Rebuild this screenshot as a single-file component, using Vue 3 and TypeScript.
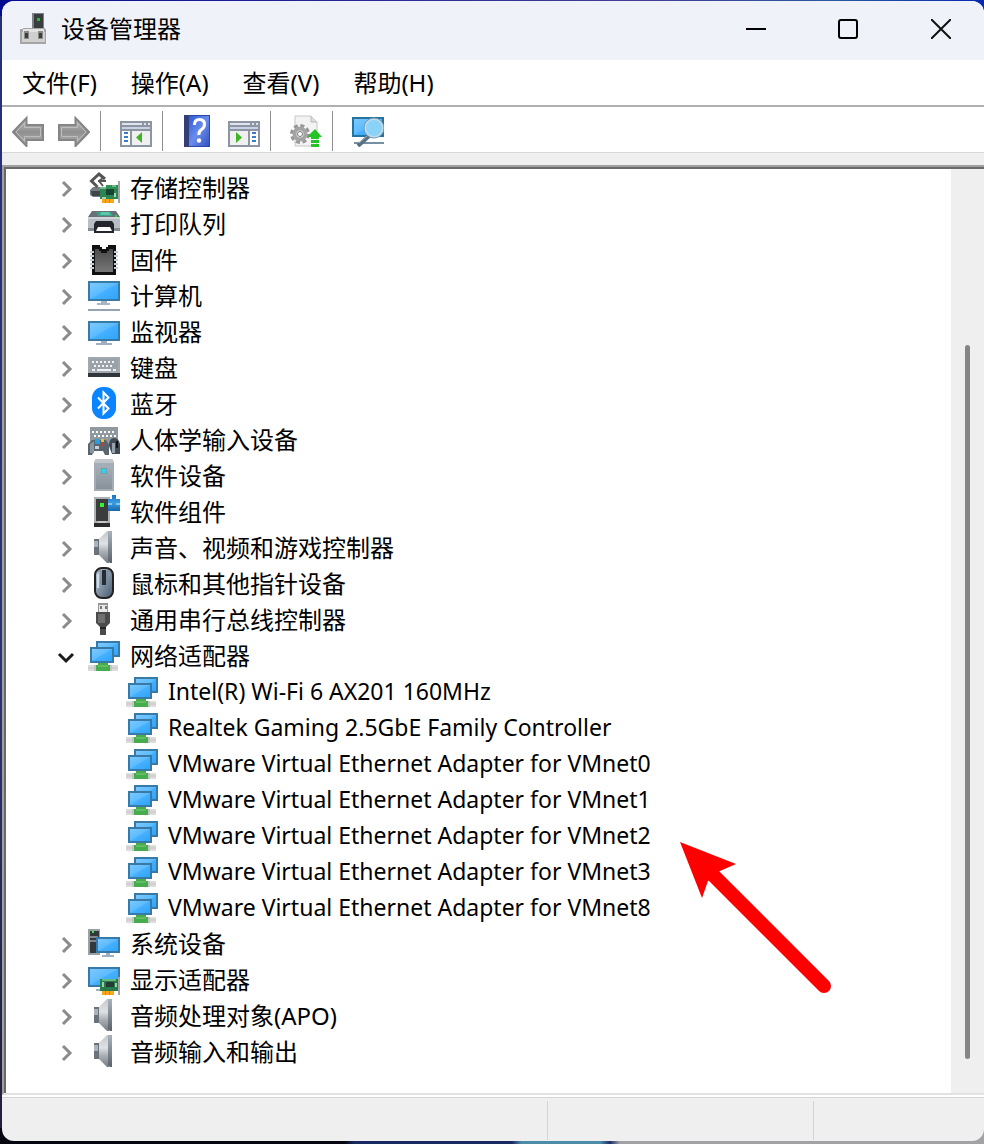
<script setup lang="ts">
import { computed, ref } from 'vue'

interface TreeNode {
  label: string
  icon: string
  children?: string[]
}

const menus: string[] = ['文件(F)', '操作(A)', '查看(V)', '帮助(H)']

const toolGroups: { icon: string; label: string }[][] = [
  [
    { icon: 'back', label: '后退' },
    { icon: 'forward', label: '前进' },
  ],
  [{ icon: 'pane-left', label: '显示/隐藏控制台树' }],
  [
    { icon: 'help', label: '帮助' },
    { icon: 'pane-right', label: '显示/隐藏操作窗格' },
  ],
  [{ icon: 'update', label: '更新驱动程序' }],
  [{ icon: 'scan', label: '扫描检测硬件改动' }],
]

const nodes: TreeNode[] = [
  { label: '存储控制器', icon: 'storage' },
  { label: '打印队列', icon: 'printer' },
  { label: '固件', icon: 'firmware' },
  { label: '计算机', icon: 'computer' },
  { label: '监视器', icon: 'monitor' },
  { label: '键盘', icon: 'keyboard' },
  { label: '蓝牙', icon: 'bluetooth' },
  { label: '人体学输入设备', icon: 'hid' },
  { label: '软件设备', icon: 'softdevice' },
  { label: '软件组件', icon: 'component' },
  { label: '声音、视频和游戏控制器', icon: 'speaker' },
  { label: '鼠标和其他指针设备', icon: 'mouse' },
  { label: '通用串行总线控制器', icon: 'usb' },
  {
    label: '网络适配器',
    icon: 'network',
    children: [
      'Intel(R) Wi-Fi 6 AX201 160MHz',
      'Realtek Gaming 2.5GbE Family Controller',
      'VMware Virtual Ethernet Adapter for VMnet0',
      'VMware Virtual Ethernet Adapter for VMnet1',
      'VMware Virtual Ethernet Adapter for VMnet2',
      'VMware Virtual Ethernet Adapter for VMnet3',
      'VMware Virtual Ethernet Adapter for VMnet8',
    ],
  },
  { label: '系统设备', icon: 'system' },
  { label: '显示适配器', icon: 'display' },
  { label: '音频处理对象(APO)', icon: 'speaker' },
  { label: '音频输入和输出', icon: 'speaker' },
]

const expanded = ref<Set<string>>(new Set(['网络适配器']))

function toggle(node: TreeNode) {
  const next = new Set(expanded.value)
  if (next.has(node.label)) next.delete(node.label)
  else next.add(node.label)
  expanded.value = next
}

const scroll = ref({ start: 19, size: 77.3 })
const thumbStyle = computed(() => ({
  top: `${scroll.value.start}%`,
  height: `${scroll.value.size}%`,
}))
</script>

<template>
  <div class="desktop">
    <svg class="defs" aria-hidden="true">
      <defs>
        <linearGradient id="g-screen" x1="0" y1="0" x2="1" y2="1">
          <stop offset="0" stop-color="#7cc9ff" />
          <stop offset="0.48" stop-color="#5dbbff" />
          <stop offset="0.52" stop-color="#45b0ff" />
          <stop offset="1" stop-color="#2ea5fd" />
        </linearGradient>
        <linearGradient id="g-arrow" x1="0" y1="0" x2="0" y2="1">
          <stop offset="0" stop-color="#c4c4c4" />
          <stop offset="0.5" stop-color="#8f8f8f" />
          <stop offset="1" stop-color="#b2b2b2" />
        </linearGradient>
        <linearGradient id="g-help" x1="0" y1="0" x2="1" y2="1">
          <stop offset="0" stop-color="#2d5bd8" />
          <stop offset="0.5" stop-color="#6b8ceb" />
          <stop offset="1" stop-color="#3252c4" />
        </linearGradient>
        <linearGradient id="g-metal" x1="0" y1="0" x2="0" y2="1">
          <stop offset="0" stop-color="#a7b0b8" />
          <stop offset="1" stop-color="#87919b" />
        </linearGradient>
        <linearGradient id="g-cone" x1="0" y1="0" x2="0" y2="1">
          <stop offset="0" stop-color="#c3c8cc" />
          <stop offset="0.4" stop-color="#dfe2e4" />
          <stop offset="0.65" stop-color="#a9aeb2" />
          <stop offset="1" stop-color="#767c81" />
        </linearGradient>
        <linearGradient id="g-rim" x1="0" y1="0" x2="0" y2="1">
          <stop offset="0" stop-color="#a9b2ba" />
          <stop offset="1" stop-color="#59626a" />
        </linearGradient>
        <linearGradient id="g-mouse" x1="0" y1="0" x2="1" y2="1">
          <stop offset="0" stop-color="#c3ced9" />
          <stop offset="0.5" stop-color="#8293a5" />
          <stop offset="1" stop-color="#465769" />
        </linearGradient>
        <linearGradient id="g-chip" x1="0" y1="0" x2="0" y2="1">
          <stop offset="0" stop-color="#4b4b4b" />
          <stop offset="1" stop-color="#777" />
        </linearGradient>
        <linearGradient id="g-plus" x1="0" y1="0" x2="0" y2="1">
          <stop offset="0" stop-color="#1f74bd" />
          <stop offset="0.5" stop-color="#3c9de0" />
          <stop offset="1" stop-color="#1767ac" />
        </linearGradient>
      </defs>

      <symbol id="i-app" viewBox="0 0 32 32">
        <path d="M13 0h12v18H13z" fill="#7d8286" />
        <path d="M15 1h9v16h-9z" fill="#3a3d3f" />
        <path d="M18 5h3v3h-3z" fill="#22c024" />
        <path d="M2 16h2v-1h22v1h1v15H1V16z" fill="#a5a5a5" />
        <path d="M4 16h21v4H4z" fill="#e3e3e3" />
        <path d="M3 19h23v10H3z" fill="#cfcfcf" />
        <path d="M5 18h5v8H5zM19 18h5v8h-5z" fill="#8a8a8a" />
        <path d="M6 20h3v5H6zM20 20h3v5h-3z" fill="#3d3d3d" />
      </symbol>

      <symbol id="i-back" viewBox="0 0 32 32">
        <path d="M1 17 14.500 3v7H31v15H14.500v6z" fill="url(#g-arrow)" stroke="#858585" stroke-width="2" />
        <path d="M4 17 12.500 8v4.500H28.500v9H12.500V26z" fill="none" stroke="#bdbdbd" />
      </symbol>
      <symbol id="i-forward" viewBox="0 0 32 32">
        <path d="M31 17 17.500 3v7H1v15h16.500v6z" fill="url(#g-arrow)" stroke="#858585" stroke-width="2" />
        <path d="M28 17 19.500 8v4.500H3.500v9h16V26z" fill="none" stroke="#bdbdbd" />
      </symbol>

      <symbol id="i-pane-left" viewBox="0 0 32 32">
        <g shape-rendering="crispEdges">
          <path d="M0 6h32v26H0z" fill="#8d94a2" />
          <path d="M2 8h20v2H2zM24 8h2v2h-2zM28 8h2v2h-2z" fill="#dfe4ee" />
          <path d="M2 12h28v2H2z" fill="#c9d2e2" />
          <path d="M2 16h8v14H2z" fill="#fff" />
          <path d="M12 16h18v14H12z" fill="#f0f0f0" />
          <path d="M4 17h4v2H4zM4 21h4v2H4zM4 25h4v2H4z" fill="#3c7cc4" />
        </g>
        <path d="M22 17v11l-6-5.500z" fill="#3fb526" />
      </symbol>
      <symbol id="i-pane-right" viewBox="0 0 32 32">
        <g shape-rendering="crispEdges">
          <path d="M0 6h32v26H0z" fill="#8d94a2" />
          <path d="M2 8h20v2H2zM24 8h2v2h-2zM28 8h2v2h-2z" fill="#dfe4ee" />
          <path d="M2 12h28v2H2z" fill="#c9d2e2" />
          <path d="M22 16h8v14h-8z" fill="#fff" />
          <path d="M2 16h18v14H2z" fill="#f0f0f0" />
          <path d="M24 17h4v2h-4zM24 21h4v2h-4zM24 25h4v2h-4z" fill="#3c7cc4" />
        </g>
        <path d="M8 17v11l6-5.500z" fill="#3fb526" />
      </symbol>

      <symbol id="i-help" viewBox="0 0 32 32">
        <path d="M2 0h26v32H2z" fill="#2a48a4" />
        <path d="M2 0h5v32H2z" fill="#343f78" />
        <path d="M7 1h20v30H7z" fill="url(#g-help)" />
        <path d="M12.500 10q0-5.500 5-5.500t5 5q0 3-3 5t-2.500 5.500" fill="none" stroke="#fff" stroke-width="3" />
        <circle cx="17" cy="25.500" r="2.200" fill="#fff" />
      </symbol>

      <symbol id="i-update" viewBox="0 0 32 32">
        <path d="M5 1h16l6 6v24H5z" fill="#f3f3f3" stroke="#c6c6c6" />
        <path d="M21 1v6h6" fill="#ddd" stroke="#bababa" />
        <circle cx="10" cy="19" r="8.500" fill="none" stroke="#969696" stroke-width="3" stroke-dasharray="4 2.700" />
        <circle cx="10" cy="19" r="5.500" fill="#f4f4f4" stroke="#a4a4a4" stroke-width="4" />
        <circle cx="10" cy="19" r="2.500" fill="#fff" stroke="#777" />
        <path d="M25 14l7 8h-3v2h-8v-2h-4z" fill="#24c424" />
        <path d="M21 25h8v3h-8zM21 29h8v3h-8z" fill="#24c424" />
      </symbol>

      <symbol id="i-scan" viewBox="0 0 32 32">
        <path d="M0 2h32v20H0z" fill="#27739f" />
        <path d="M2 4h28v16H2z" fill="url(#g-screen)" />
        <path d="M2 27h30v2H2z" fill="#7590a5" />
        <path d="M17 21 6 31" stroke="#587080" stroke-width="4" />
        <path d="M16 20 7 28" stroke="#a8b6be" stroke-width="1" />
        <circle cx="22" cy="13" r="9" fill="#8bd2f9" stroke="#c4dce9" stroke-width="2" />
        <circle cx="22" cy="13" r="10" fill="none" stroke="#6b9db9" />
      </symbol>

      <symbol id="i-storage" viewBox="0 0 32 32">
        <path d="M2 19l3-3h7v10H5l-3-2z" fill="#737d82" />
        <path d="M3 20h10v5H4z" fill="#3f4549" />
        <path d="M17 8l-6-5-7.500 7 6 6" fill="none" stroke="#555" stroke-width="3" />
        <path d="M10 10h8M11 10l4-3M11 10l4 5" fill="none" stroke="#555" stroke-width="2" />
        <g shape-rendering="crispEdges">
          <path d="M30 10h2v22h-2z" fill="#a3a3a3" />
          <path d="M18 14h12v4H18z" fill="#2f9152" />
          <path d="M12 18h18v10H12z" fill="#2c8354" />
          <path d="M12 16h6v2h-6zM24 14h4v2h-4z" fill="#72bb8e" />
          <path d="M18 18h8v6h-8z" fill="#174432" />
          <path d="M14 26h4v2h-4zM26 22h2v4h-2z" fill="#a6d2b5" />
          <path d="M14 28h12v4H14z" fill="#fba719" />
          <path d="M17 28h1v4h-1zM21 28h1v4h-1z" fill="#d88608" />
        </g>
      </symbol>

      <symbol id="i-printer" viewBox="0 0 32 32">
        <path d="M4 4h24l4 6H0z" fill="#687078" />
        <path d="M8 5h15l2 4H10z" fill="#3c9c87" />
        <path d="M13 5h8l2 3H12z" fill="#56c9a7" />
        <path d="M0 10h32v13H0z" fill="#b7bec6" />
        <path d="M0 10h32v2H0z" fill="#d2d6db" />
        <path d="M0 21h32v3H0z" fill="#838b95" />
        <path d="M27 8h2v2h-2z" fill="#20e23f" />
        <path d="M8 14h16l2 3v9H6v-9z" fill="#23272b" />
        <path d="M10 20h12l2 4H8z" fill="#fff" />
      </symbol>

      <symbol id="i-firmware" viewBox="0 0 32 32">
        <g shape-rendering="crispEdges">
          <path d="M4 2h8v2h2v2h4V4h2V2h8v30H4z" fill="#111" />
          <path d="M7 6h4v2h2v2h6V8h2V6h4v23H7z" fill="url(#g-chip)" />
          <path d="M2 9h4M2 13h4M2 17h4M2 21h4M2 25h4M26 9h4M26 13h4M26 17h4M26 21h4M26 25h4" stroke="#c3ccd9" stroke-width="2" />
        </g>
      </symbol>

      <symbol id="i-computer" viewBox="0 0 32 32">
        <g shape-rendering="crispEdges">
          <path d="M0 2h32v20H0z" fill="#3979a5" />
          <path d="M2 4h28v16H2z" fill="url(#g-screen)" />
          <path d="M13 22h6v2h3v2H9v-2h4z" fill="#a9b5c1" />
          <path d="M0 30h32v2H0z" fill="#94a2b3" />
        </g>
      </symbol>

      <symbol id="i-monitor" viewBox="0 0 32 32">
        <g shape-rendering="crispEdges">
          <path d="M0 6h32v20H0z" fill="#3979a5" />
          <path d="M2 8h28v16H2z" fill="url(#g-screen)" />
          <path d="M13 26h6v2h5v2H8v-2h5z" fill="#a2afbe" />
        </g>
      </symbol>

      <symbol id="i-keyboard" viewBox="0 0 32 32">
        <g shape-rendering="crispEdges">
          <path d="M0 6h32v16H0z" fill="#a1a8ae" />
          <path d="M2 8h28v12H2z" fill="#9aa2a9" />
          <path d="M4 11h24M6 15h20" stroke="#f3f4f5" stroke-width="2" stroke-dasharray="2 2" />
          <path d="M4 18h3v2H4zM9 18h14v2H9zM25 18h3v2h-3z" fill="#eef0f1" />
          <path d="M0 22h32v4H0z" fill="#30373c" />
        </g>
      </symbol>

      <symbol id="i-bluetooth" viewBox="0 0 32 32">
        <rect x="4" y="0" width="24" height="32" rx="11" fill="#0a84ff" />
        <path d="M10 10.500 20.500 21.500 15.500 26.500V5.500L20.500 10.500 10 21.500" fill="none" stroke="#fff" stroke-width="2" />
      </symbol>

      <symbol id="i-hid" viewBox="0 0 32 32">
        <g shape-rendering="crispEdges">
          <path d="M2 4h28v18H2z" fill="#9199a0" />
          <path d="M4 9h24M6 13h22" stroke="#fff" stroke-width="2" stroke-dasharray="2 2" />
        </g>
        <path d="M4 17h14l3 5v10h-4l-2-4H6l-2 4H0V21z" fill="#58646e" />
        <path d="M2 21l4-3v12H2z" fill="#8997a2" />
        <path d="M7 16h5v5H7z" fill="#2a9ed8" />
        <path d="M13 16h3v3h-3z" fill="#f4bd2d" />
        <path d="M13 20h3v3h-3z" fill="#d7332b" />
        <path d="M7 23h4v3H7z" fill="#cad1d6" />
        <path d="M21 23q0-8 5-8t6 6v10H24z" fill="#434c54" />
        <path d="M24 20h3v10h-3z" fill="#97a4b0" />
        <path d="M28 18h2v7h-2z" fill="#111" />
      </symbol>

      <symbol id="i-softdevice" viewBox="0 0 32 32">
        <path d="M8 0h16l2 3v29H6V3z" fill="#a4acb4" />
        <path d="M8 0h16l2 4H6z" fill="#c0c6cb" />
        <path d="M8 6h16v24H8z" fill="url(#g-metal)" />
        <path d="M13 9h6v6h-6z" fill="#6fa1ad" />
        <path d="M14 10h4v4h-4z" fill="#24d8f4" />
      </symbol>

      <symbol id="i-component" viewBox="0 0 32 32">
        <g shape-rendering="crispEdges">
          <path d="M6 2h16v26H6z" fill="#adb2b6" />
          <path d="M8 4h12v22H8z" fill="#3c3c3c" />
          <path d="M12 8h4v4h-4z" fill="#2dfa2c" />
          <path d="M6 28h16v4H6z" fill="#2c2c2c" />
          <path d="M10 26h8v2h-8z" fill="#c9c9c9" />
          <path d="M24 0h4v4h4v12H20V4h4z" fill="url(#g-plus)" />
          <path d="M20 8h4v2h-4zM28 8h4v2h-4z" fill="#82c6f5" />
        </g>
      </symbol>

      <symbol id="i-speaker" viewBox="0 0 32 32">
        <path d="M6 8h6v16H6z" fill="#6b737a" />
        <path d="M6 10h4v6H6z" fill="#abb4bb" />
        <path d="M11 8 19 0h2v32h-2L11 24z" fill="url(#g-cone)" />
        <path d="M20 0h4v32h-2l-2-2z" fill="url(#g-rim)" />
      </symbol>

      <symbol id="i-mouse" viewBox="0 0 32 32">
        <rect x="7" y="1" width="18" height="30" rx="7" fill="url(#g-mouse)" stroke="#222" stroke-width="2" />
        <path d="M10 4h3v13h6V4h3" fill="none" stroke="#728395" />
        <rect x="14" y="3" width="4" height="15" fill="#252c33" />
        <path d="M10 7v14" stroke="#cfdbe6" stroke-width="2" />
      </symbol>

      <symbol id="i-usb" viewBox="0 0 32 32">
        <path d="M10 0h10v9H10z" fill="#949494" />
        <path d="M11 2h8v7h-8z" fill="#e9e9e9" />
        <path d="M12 3h2v3h-2zM17 3h2v3h-2z" fill="#777" />
        <path d="M8 9h14v11l-4 4v8h-6v-8l-4-4z" fill="#4b4b4b" />
        <path d="M10 11h7v9h-7z" fill="#707070" />
        <path d="M12 24h6v2h-6z" fill="#252525" />
      </symbol>

      <symbol id="i-network" viewBox="0 0 32 32">
        <g shape-rendering="crispEdges">
          <path d="M8 2h24v16H8z" fill="#3979a5" />
          <path d="M10 4h20v12H10z" fill="url(#g-screen)" />
          <path d="M2 8h24v16H2z" fill="#3979a5" />
          <path d="M4 10h20v12H4z" fill="url(#g-screen)" />
          <path d="M0 26h30v6H0z" fill="#dcdcdc" />
          <path d="M0 28h30v2H0z" fill="#d0d0d0" />
          <path d="M6 26h2v6H6zM22 26h2v6h-2z" fill="#c2c6c2" />
          <path d="M10 24h10v2h2v6H8v-6h2z" fill="#46ac4e" />
          <path d="M10 26h10v2H10z" fill="#62bd62" />
        </g>
      </symbol>

      <symbol id="i-system" viewBox="0 0 32 32">
        <g shape-rendering="crispEdges">
          <path d="M0 2h12v26H0z" fill="#9aa1a6" />
          <path d="M2 4h9v22H2z" fill="#33383b" />
          <path d="M4 4h2v2H4z" fill="#35ed4c" />
          <path d="M2 9h8v2H2zM2 13h6v2H2z" fill="#7f878d" />
          <path d="M8 10h24v16H8z" fill="#3979a5" />
          <path d="M10 12h20v12H10z" fill="url(#g-screen)" />
          <path d="M18 26h4v2h4v2H14v-2h4z" fill="#9fb0c0" />
        </g>
      </symbol>

      <symbol id="i-display" viewBox="0 0 32 32">
        <g shape-rendering="crispEdges">
          <path d="M0 4h32v20H0z" fill="#3979a5" />
          <path d="M2 6h28v16H2z" fill="url(#g-screen)" />
          <path d="M8 26h6v2H8z" fill="#9fb0c0" />
          <path d="M30 14h2v18h-2z" fill="#a3a3a3" />
          <path d="M12 16h18v12H12z" fill="#267b49" />
          <path d="M14 16h14v2H14z" fill="#63b884" />
          <path d="M18 19h8v5h-8z" fill="#243a32" />
          <path d="M14 19h2v5h-2zM27 20h2v4h-2z" fill="#9bd0ae" />
          <path d="M14 28h12v4H14z" fill="#fba719" />
          <path d="M17 28h1v4h-1zM21 28h1v4h-1z" fill="#d88608" />
        </g>
      </symbol>
    </svg>

    <main class="window">
      <header class="titlebar">
        <svg class="icon app-icon"><use href="#i-app" /></svg>
        <h1 class="title">设备管理器</h1>
        <div class="caption">
          <button type="button" class="cap-btn" aria-label="最小化">
            <svg width="20" height="20"><path d="M0 10h20" stroke="#000" stroke-width="2" /></svg>
          </button>
          <button type="button" class="cap-btn" aria-label="最大化">
            <svg width="20" height="20">
              <rect x="1" y="1" width="18" height="18" rx="2" fill="none" stroke="#000" stroke-width="2" />
            </svg>
          </button>
          <button type="button" class="cap-btn close" aria-label="关闭">
            <svg width="20" height="20"><path d="M0 0 20 20M20 0 0 20" stroke="#111" stroke-width="2" /></svg>
          </button>
        </div>
      </header>

      <nav class="menubar">
        <button v-for="m in menus" :key="m" type="button" class="menu">{{ m }}</button>
      </nav>

      <div class="toolbar" role="toolbar">
        <div v-for="(group, g) in toolGroups" :key="g" class="tool-group">
          <button v-for="t in group" :key="t.icon" type="button" class="tool" :aria-label="t.label">
            <svg class="icon"><use :href="`#i-${t.icon}`" /></svg>
          </button>
        </div>
      </div>

      <section class="content">
        <ul class="tree" role="tree">
          <li v-for="node in nodes" :key="node.label" role="treeitem" :aria-expanded="expanded.has(node.label)">
            <div class="row category">
              <button type="button" class="twisty" :aria-label="node.label" @click="toggle(node)">
                <svg v-if="expanded.has(node.label)" width="18" height="18">
                  <path d="M2 6l7 7 7-7" fill="none" stroke="#1b1b1b" stroke-width="3" />
                </svg>
                <svg v-else width="18" height="18">
                  <path d="M6 2l7 7-7 7" fill="none" stroke="#8b8b8b" stroke-width="3" />
                </svg>
              </button>
              <svg class="icon"><use :href="`#i-${node.icon}`" /></svg>
              <span class="label">{{ node.label }}</span>
            </div>
            <ul v-if="node.children && expanded.has(node.label)" class="branch" role="group">
              <li v-for="child in node.children" :key="child" class="row child" role="treeitem">
                <svg class="icon"><use href="#i-network" /></svg>
                <span class="label">{{ child }}</span>
              </li>
            </ul>
          </li>
        </ul>
        <svg class="pointer" width="156" height="156" aria-hidden="true">
          <path d="M0 0 56 22 40 29 28 39 22 56z" fill="#f00" />
          <path d="M33 33 144 144" stroke="#f00" stroke-width="14" stroke-linecap="round" />
        </svg>
        <div class="scrollbar" role="scrollbar" aria-orientation="vertical" :aria-valuenow="scroll.start">
          <div class="thumb" :style="thumbStyle"></div>
        </div>
      </section>

      <footer class="status">
        <span class="cell"></span>
        <span class="cell"></span>
        <span class="cell"></span>
      </footer>
    </main>
  </div>
</template>

<style>
body {
  margin: 0;
}
</style>

<style scoped>
.desktop {
  box-sizing: border-box;
  min-height: 100vh;
  padding: 1px 0 3px 2px;
  display: flex;
  background:
    linear-gradient(90deg, #05060f 0 35%, #182860 36% 52%, #4d8ca8 53% 61%, #1d2d69 62%, #a2a2a4 63%) bottom / 100% 16px no-repeat,
    linear-gradient(90deg, #040b91, #443d98 65%, #285a9f 85%, #0828b2) top / 100% 16px no-repeat,
    linear-gradient(#26307a, #2d3270 60%, #202038);
  font-family: "Noto Sans", "Noto Sans CJK SC", sans-serif;
  font-size: 24px;
  color: #000;
}

.defs {
  position: absolute;
  width: 0;
  height: 0;
}

.window {
  flex: 1;
  min-width: 0;
  display: flex;
  flex-direction: column;
  overflow: hidden;
  border-radius: 12px;
  background: #efefef;
}

button {
  margin: 0;
  padding: 0;
  border: 0;
  background: none;
  font: inherit;
  color: inherit;
}

.icon {
  display: block;
  flex: none;
  width: 32px;
  height: 32px;
}

.titlebar {
  box-sizing: border-box;
  display: flex;
  align-items: center;
  height: 59px;
  padding-left: 17px;
  padding-bottom: 3px;
  background: #f0f2f9;
}

.title {
  flex: 1;
  margin: 0 0 0 10px;
  font-size: 24px;
  line-height: 36px;
  font-weight: 400;
}

.caption {
  display: flex;
  align-self: stretch;
}

.cap-btn {
  display: flex;
  align-items: center;
  justify-content: center;
  width: 92px;
}

.cap-btn.close {
  box-sizing: border-box;
  width: 90px;
  padding-left: 4px;
}

.menubar {
  display: flex;
  gap: 34px;
  padding: 5px 20px 4px;
  background: #fff;
  border-bottom: 2px solid #b0b0b2;
}

.menu {
  line-height: 36px;
  white-space: nowrap;
}

.toolbar {
  display: flex;
  padding: 4px 0 1px;
  background: #fff;
  border-bottom: 1px solid #d8d8d8;
}

.tool-group {
  display: flex;
  align-items: center;
  gap: 14px;
  height: 40px;
  padding: 0 10px 0 19px;
}

.tool-group:first-child {
  padding-left: 10px;
}

.tool-group:not(:last-child) {
  border-right: 1px solid #8e8e8e;
}

.content {
  position: relative;
  flex: 1;
  display: flex;
  margin-top: 12px;
  border-top: 2px solid #a0a0a0;
  border-left: 2px solid #a0a0a0;
  border-bottom: 2px solid #e3e3e3;
  background: #fff;
}

.tree {
  flex: 1;
  min-width: 0;
  padding: 1px 0 16px;
  border-top: 2px solid #696969;
  border-left: 2px solid #696969;
}

.tree,
.branch {
  margin: 0;
  list-style: none;
}

.branch {
  padding: 0;
}

.row {
  display: flex;
  align-items: center;
  height: 34px;
  padding-bottom: 2px;
  padding-left: 50px;
}

.row.child {
  padding-left: 120px;
  font-size: 23px;
}

.twisty {
  display: flex;
  justify-content: center;
  width: 20px;
  margin-right: 12px;
  padding-top: 4px;
}

.label {
  margin-left: 10px;
  line-height: 34px;
  white-space: nowrap;
}

.category .label {
  padding-top: 2px;
}

.pointer {
  position: absolute;
  left: 676px;
  top: 675px;
}

.scrollbar {
  position: relative;
  width: 33px;
  border-top: 2px solid #696969;
  background: #efefef;
}

.thumb {
  position: absolute;
  left: 14px;
  width: 5px;
  border-radius: 3px;
  background: #858585;
}

.status {
  box-sizing: border-box;
  display: grid;
  grid-template-columns: 546fr 266fr 170fr;
  height: 44px;
  margin-top: 2px;
  padding: 3px 0 1px;
  border-top: 1px solid #d4d4d4;
  box-shadow: 0 -2px 0 #fff;
}

.cell:not(:last-child) {
  border-right: 1px solid #d4d4d4;
}
</style>
